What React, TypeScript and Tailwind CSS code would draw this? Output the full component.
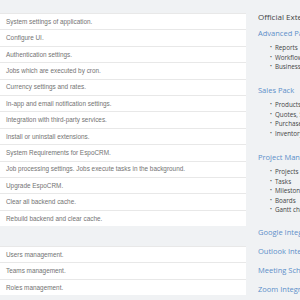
export default function App() {
  const system = [
    "System settings of application.",
    "Configure UI.",
    "Authentication settings.",
    "Jobs which are executed by cron.",
    "Currency settings and rates.",
    "In-app and email notification settings.",
    "Integration with third-party services.",
    "Install or uninstall extensions.",
    "System Requirements for EspoCRM.",
    "Job processing settings. Jobs execute tasks in the background.",
    "Upgrade EspoCRM.",
    "Clear all backend cache.",
    "Rebuild backend and clear cache.",
  ];
  const users = ["Users management.", "Teams management.", "Roles management."];

  const packs = [
    { name: "Advanced Pack", items: ["Reports", "Workflows", "Business Process Management"] },
    { name: "Sales Pack", items: ["Products", "Quotes, Sales Orders, Invoices", "Purchase Orders", "Inventory Management"] },
    { name: "Project Management", items: ["Projects", "Tasks", "Milestones", "Boards", "Gantt charts"] },
  ];
  const more = ["Google Integration", "Outlook Integration", "Meeting Scheduler", "Zoom Integration"];

  return (
    <div className="w-[300px] h-[300px] overflow-hidden bg-[#f0f2f4] flex font-['Liberation_Sans',Arial,sans-serif]">
      {/* left: admin list */}
      <div className="w-[246px] shrink-0 pt-[13px]">
        <div className="bg-white">
          {system.map((t) => (
            <div key={t} className="h-[16.4px] flex items-center px-[6px] border-t border-[#e8e8e8] text-[6.4px] text-[#737373] whitespace-nowrap overflow-hidden">
              {t}
            </div>
          ))}
        </div>
        <div className="h-[20px]" />
        <div className="bg-white">
          {users.map((t) => (
            <div key={t} className="h-[16.4px] flex items-center px-[6px] border-t border-[#e8e8e8] text-[6.4px] text-[#737373] whitespace-nowrap overflow-hidden">
              {t}
            </div>
          ))}
        </div>
      </div>

      {/* right: official extensions */}
      <div className="flex-1 pl-[12px] pt-[11px] font-['Open_Sans',sans-serif] whitespace-nowrap overflow-hidden">
        <div className="text-[8px] text-[#444] leading-[12px]">Official Extensions</div>
        <div className="mt-[4px] flex flex-col gap-[12.5px]">
          {packs.map((p) => (
            <div key={p.name}>
              <div className="text-[7.5px] text-[#5d8fc9] leading-[12px]">{p.name}</div>
              <ul className="mt-[4.2px] pl-[12px] text-[6.3px] text-[#444] leading-[9.5px]">
                {p.items.map((i) => (
                  <li key={i} className="flex items-center gap-[3px]">
                    <span className="text-[5px]">•</span>
                    {i}
                  </li>
                ))}
              </ul>
            </div>
          ))}
        </div>
        <div className="mt-[8.5px]">
          {more.map((m) => (
            <div key={m} className="text-[7.5px] text-[#5d8fc9] leading-[19px]">{m}</div>
          ))}
        </div>
      </div>
    </div>
  );
}
